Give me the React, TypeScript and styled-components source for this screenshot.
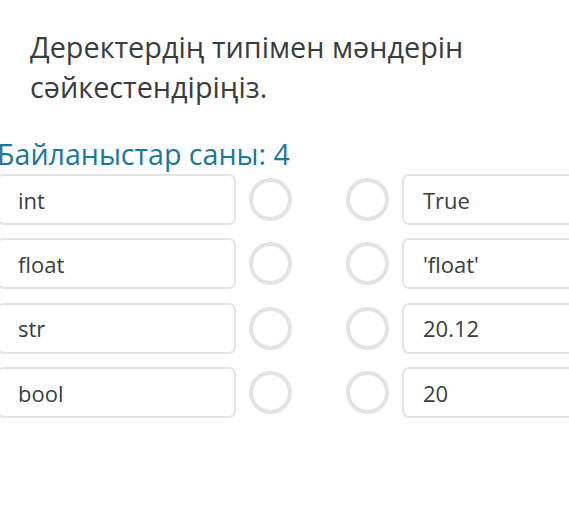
import React from "react";
import styled, { createGlobalStyle } from "styled-components";

const Global = createGlobalStyle`
  html, body { margin: 0; padding: 0; background: #ffffff; overflow: hidden; }
  body { font-family: "Open Sans", "Noto Sans", sans-serif; }
`;

const Page = styled.div`
  width: 569px;
  height: 513px;
  overflow: hidden;
  padding-top: 27px;
  box-sizing: border-box;
`;

const Title = styled.h1`
  margin: 0 0 0 30px;
  font-size: 28.8px;
  line-height: 40px;
  font-weight: 400;
  color: #393d40;
  width: 500px;
`;

const Count = styled.div`
  margin: 29px 0 0 -3px;
  font-size: 28.6px;
  line-height: 36px;
  color: #1a77a0;
  white-space: nowrap;
`;

const List = styled.div`
  display: flex;
  flex-direction: column;
  gap: 13.4px;
  margin: 2px 0 0 -3px;
`;

const Row = styled.div`
  display: flex;
  align-items: center;
  height: 51px;
`;

const Box = styled.div<{ $gap?: number }>`
  flex: 0 0 auto;
  width: 239px;
  height: 51px;
  box-sizing: border-box;
  border: 2px solid #e2e5e7;
  border-radius: 7px;
  display: flex;
  align-items: center;
  padding: 0 0 0 19px;
  margin-left: ${(p) => p.$gap ?? 0}px;
  font-size: 22px;
  color: #3a3d40;
`;

const Dot = styled.div<{ $gap: number }>`
  flex: 0 0 auto;
  width: 43px;
  height: 43px;
  box-sizing: border-box;
  border: 4px solid #e1e4e6;
  border-radius: 50%;
  margin-left: ${(p) => p.$gap}px;
`;

const pairs: [string, string][] = [
  ["int", "True"],
  ["float", "'float'"],
  ["str", "20.12"],
  ["bool", "20"],
];

export default function App() {
  return (
    <Page>
      <Global />
      <Title>Деректердің типімен мәндерін сәйкестендіріңіз.</Title>
      <Count>Байланыстар саны: 4</Count>
      <List>
        {pairs.map(([a, b]) => (
          <Row key={a}>
            <Box>{a}</Box>
            <Dot $gap={13} />
            <Dot $gap={54} />
            <Box $gap={13}>{b}</Box>
          </Row>
        ))}
      </List>
    </Page>
  );
}
